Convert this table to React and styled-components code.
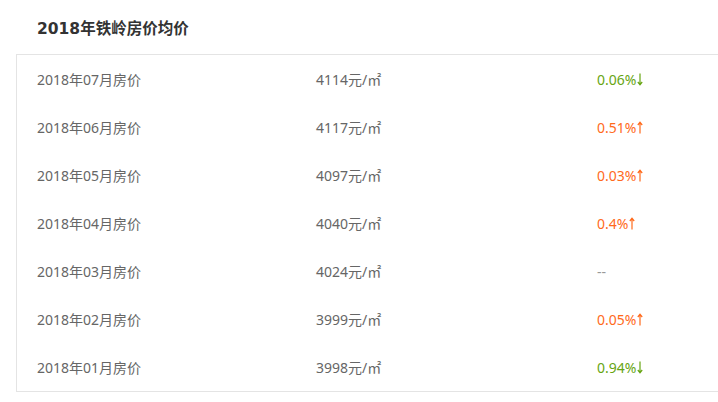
import React from 'react';
import styled, { createGlobalStyle } from 'styled-components';

const GlobalStyle = createGlobalStyle`
  html, body {
    margin: 0;
    padding: 0;
    background: #fff;
    overflow: hidden;
  }
  body {
    font-family: "Noto Sans", "Noto Sans CJK SC", sans-serif;
  }
`;

// datos de los precios por mes
const precios = [
  { mes: '2018年07月房价', precio: '4114元/㎡', cambio: '0.06%', dir: 'down' },
  { mes: '2018年06月房价', precio: '4117元/㎡', cambio: '0.51%', dir: 'up' },
  { mes: '2018年05月房价', precio: '4097元/㎡', cambio: '0.03%', dir: 'up' },
  { mes: '2018年04月房价', precio: '4040元/㎡', cambio: '0.4%', dir: 'up' },
  { mes: '2018年03月房价', precio: '4024元/㎡', cambio: '--', dir: 'none' },
  { mes: '2018年02月房价', precio: '3999元/㎡', cambio: '0.05%', dir: 'up' },
  { mes: '2018年01月房价', precio: '3998元/㎡', cambio: '0.94%', dir: 'down' },
];

// flechita fina como en la referencia
const Flecha = ({ dir }) => (
  <ArrowSvg width="6" height="13" viewBox="0 0 6 13" dir={dir}>
    <path d="M3 1.5V12.5M0.8 4L3 1.3L5.2 4" fill="none" stroke="currentColor" strokeWidth="1.2" />
  </ArrowSvg>
);

function App() {
  return (
    <>
      <GlobalStyle />
      <Wrapper>
        <Title>2018年铁岭房价均价</Title>
        <Table>
          {precios.map((item, index) => (
            <Row key={index}>
              <Cell>{item.mes}</Cell>
              <Cell>{item.precio}</Cell>
              <Change dir={item.dir}>
                {item.cambio}
                {item.dir !== 'none' && <Flecha dir={item.dir} />}
              </Change>
            </Row>
          ))}
        </Table>
      </Wrapper>
    </>
  );
}

export default App;

const Wrapper = styled.div`
  width: 740px;
`;

const Title = styled.h2`
  margin: 0;
  padding: 17px 0 13px 37px;
  font-family: "DejaVu Sans", "Noto Sans CJK SC", sans-serif;
  font-size: 15.5px;
  line-height: 24px;
  font-weight: bold;
  color: #333;
`;

const Table = styled.div`
  margin-left: 16px;
  border: 1px solid #e4e4e4;
`;

const Row = styled.div`
  display: grid;
  grid-template-columns: 279px 281px 1fr;
  height: 48px;
  align-items: center;
  padding-left: 20px;
`;

const Cell = styled.div`
  font-size: 14px;
  color: #666;
`;

const Change = styled(Cell)`
  display: flex;
  align-items: center;
  color: ${(p) => (p.dir === 'up' ? '#ff6a1c' : p.dir === 'down' ? '#67a512' : '#999')};
`;

const ArrowSvg = styled.svg`
  margin-left: 1px;
  margin-top: 1px;
  transform: ${(p) => (p.dir === 'down' ? 'rotate(180deg)' : 'none')};
`;
